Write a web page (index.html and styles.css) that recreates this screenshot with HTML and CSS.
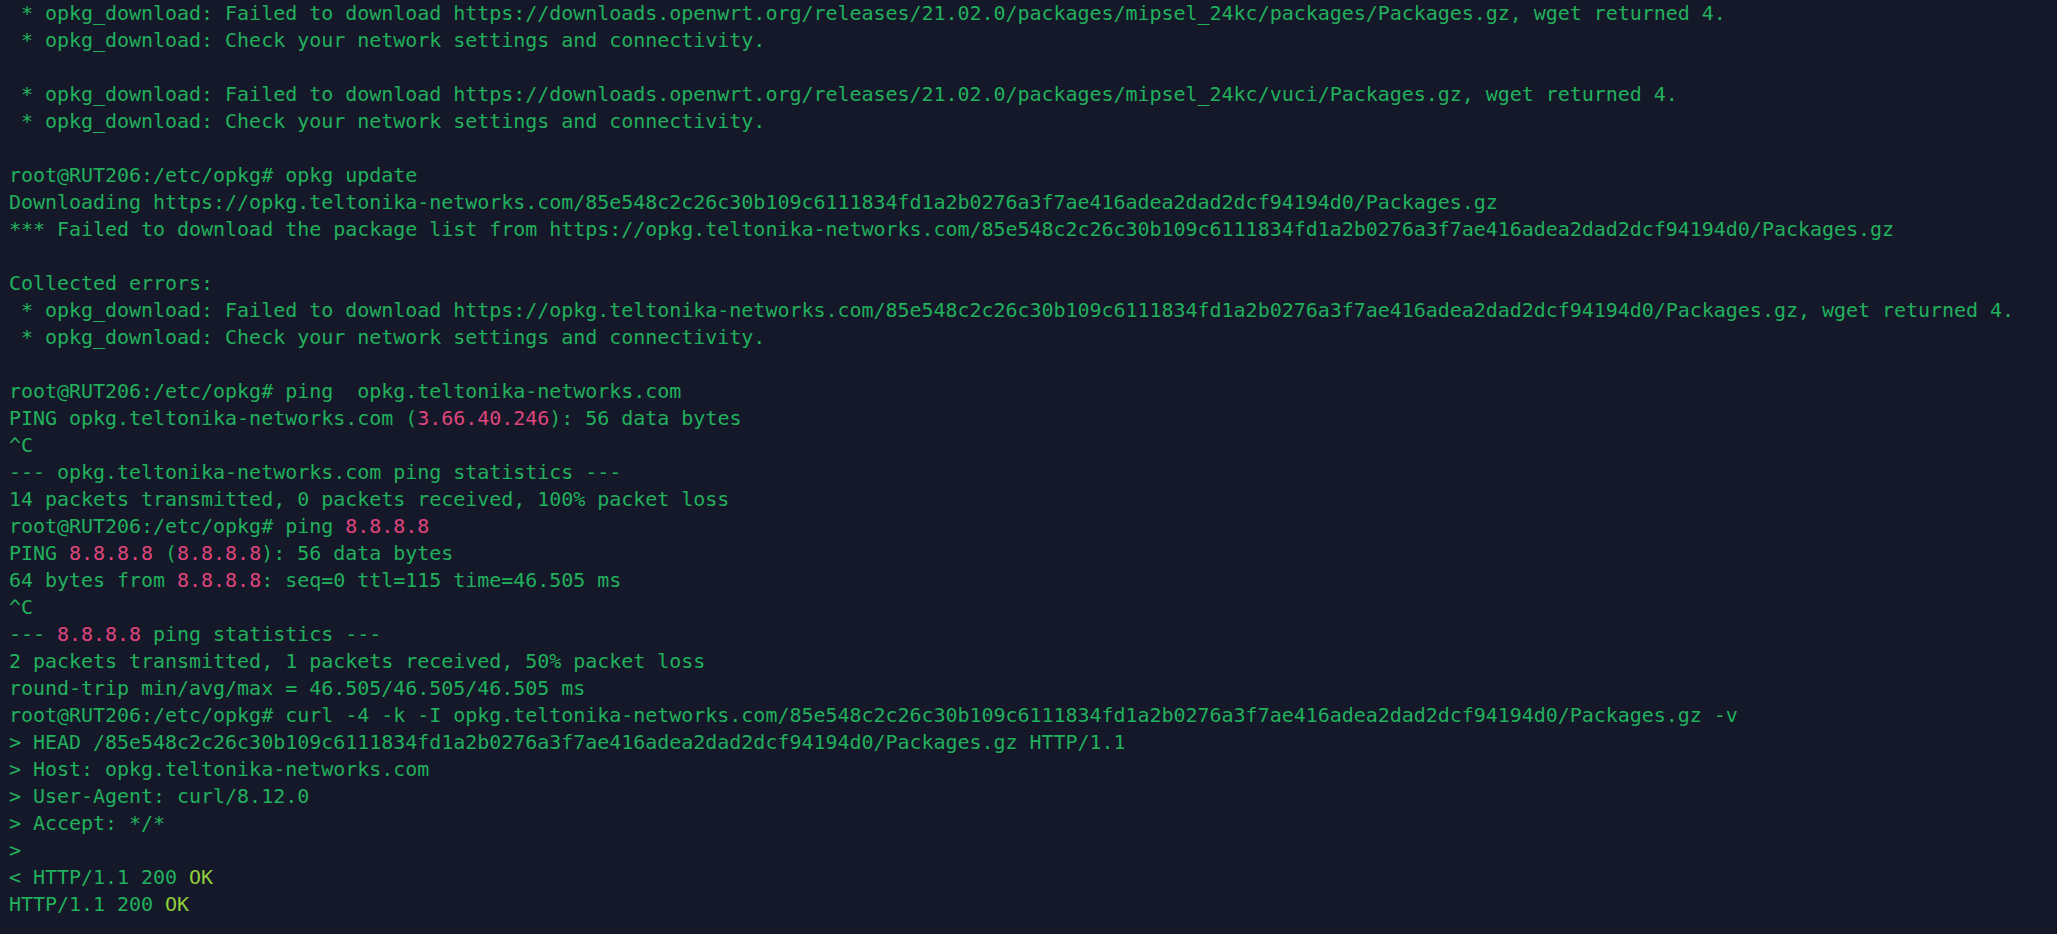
FILE: index.html
```html
<!DOCTYPE html>
<html>
<head>
<meta charset="utf-8">
<link rel="stylesheet" href="styles.css">
</head>
<body>
<pre class="term"> * opkg_download: Failed to download https://downloads.openwrt.org/releases/21.02.0/packages/mipsel_24kc/packages/Packages.gz, wget returned 4.
 * opkg_download: Check your network settings and connectivity.

 * opkg_download: Failed to download https://downloads.openwrt.org/releases/21.02.0/packages/mipsel_24kc/vuci/Packages.gz, wget returned 4.
 * opkg_download: Check your network settings and connectivity.

root@RUT206:/etc/opkg# opkg update
Downloading https://opkg.teltonika-networks.com/85e548c2c26c30b109c6111834fd1a2b0276a3f7ae416adea2dad2dcf94194d0/Packages.gz
*** Failed to download the package list from https://opkg.teltonika-networks.com/85e548c2c26c30b109c6111834fd1a2b0276a3f7ae416adea2dad2dcf94194d0/Packages.gz

Collected errors:
 * opkg_download: Failed to download https://opkg.teltonika-networks.com/85e548c2c26c30b109c6111834fd1a2b0276a3f7ae416adea2dad2dcf94194d0/Packages.gz, wget returned 4.
 * opkg_download: Check your network settings and connectivity.

root@RUT206:/etc/opkg# ping  opkg.teltonika-networks.com
PING opkg.teltonika-networks.com (<span class="num">3.66.40.246</span>): 56 data bytes
^C
--- opkg.teltonika-networks.com ping statistics ---
14 packets transmitted, 0 packets received, 100% packet loss
root@RUT206:/etc/opkg# ping <span class="num">8.8.8.8</span>
PING <span class="num">8.8.8.8</span> (<span class="num">8.8.8.8</span>): 56 data bytes
64 bytes from <span class="num">8.8.8.8</span>: seq=0 ttl=115 time=46.505 ms
^C
--- <span class="num">8.8.8.8</span> ping statistics ---
2 packets transmitted, 1 packets received, 50% packet loss
round-trip min/avg/max = 46.505/46.505/46.505 ms
root@RUT206:/etc/opkg# curl -4 -k -I opkg.teltonika-networks.com/85e548c2c26c30b109c6111834fd1a2b0276a3f7ae416adea2dad2dcf94194d0/Packages.gz -v
&gt; HEAD /85e548c2c26c30b109c6111834fd1a2b0276a3f7ae416adea2dad2dcf94194d0/Packages.gz HTTP/1.1
&gt; Host: opkg.teltonika-networks.com
&gt; User-Agent: curl/8.12.0
&gt; Accept: */*
&gt;
&lt; HTTP/1.1 200 <span class="ok">OK</span>
HTTP/1.1 200 <span class="ok">OK</span></pre>
</body>
</html>
```
FILE: styles.css
```css
html, body {
  margin: 0;
  padding: 0;
  background: #141829;
  height: 100%;
  overflow: hidden;
}
.term {
  margin: 0;
  padding: 0 0 0 9px;
  font-family: "DejaVu Sans Mono", monospace;
  font-size: 20px;
  line-height: 27px;
  letter-spacing: -0.035px;
  color: #22b05d;
  white-space: pre;
}
.num {
  color: #df457c;
}
.ok {
  color: #92cf3c;
}
```
